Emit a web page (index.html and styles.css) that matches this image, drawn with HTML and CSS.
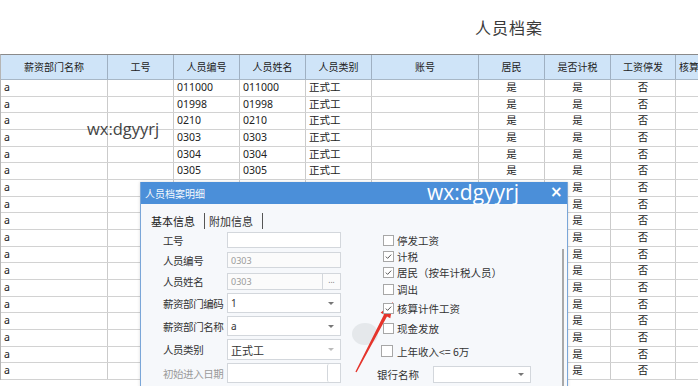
FILE: index.html
```html
<!DOCTYPE html>
<html lang="zh">
<head>
<meta charset="utf-8">
<title>人员档案</title>
<link rel="stylesheet" href="styles.css">
</head>
<body>
<div class="page">
  <div class="title">人员档案</div>
  <div class="grid">
    <div class="row head">
      <div class="c">薪资部门名称</div><div class="c">工号</div><div class="c">人员编号</div><div class="c">人员姓名</div><div class="c">人员类别</div><div class="c">账号</div><div class="c">居民</div><div class="c">是否计税</div><div class="c">工资停发</div><div class="c l">核算计件工资</div>
    </div>
    <div class="row"><div class="c">a</div><div class="c"></div><div class="c">011000</div><div class="c">011000</div><div class="c">正式工</div><div class="c"></div><div class="c m">是</div><div class="c m">是</div><div class="c m">否</div><div class="c"></div></div>
    <div class="row"><div class="c">a</div><div class="c"></div><div class="c">01998</div><div class="c">01998</div><div class="c">正式工</div><div class="c"></div><div class="c m">是</div><div class="c m">是</div><div class="c m">否</div><div class="c"></div></div>
    <div class="row"><div class="c">a</div><div class="c"></div><div class="c">0210</div><div class="c">0210</div><div class="c">正式工</div><div class="c"></div><div class="c m">是</div><div class="c m">是</div><div class="c m">否</div><div class="c"></div></div>
    <div class="row"><div class="c">a</div><div class="c"></div><div class="c">0303</div><div class="c">0303</div><div class="c">正式工</div><div class="c"></div><div class="c m">是</div><div class="c m">是</div><div class="c m">否</div><div class="c"></div></div>
    <div class="row"><div class="c">a</div><div class="c"></div><div class="c">0304</div><div class="c">0304</div><div class="c">正式工</div><div class="c"></div><div class="c m">是</div><div class="c m">是</div><div class="c m">否</div><div class="c"></div></div>
    <div class="row"><div class="c">a</div><div class="c"></div><div class="c">0305</div><div class="c">0305</div><div class="c">正式工</div><div class="c"></div><div class="c m">是</div><div class="c m">是</div><div class="c m">否</div><div class="c"></div></div>
    <div class="row"><div class="c">a</div><div class="c"></div><div class="c">0306</div><div class="c">0306</div><div class="c">正式工</div><div class="c"></div><div class="c m">是</div><div class="c m">是</div><div class="c m">否</div><div class="c"></div></div>
    <div class="row"><div class="c">a</div><div class="c"></div><div class="c">0307</div><div class="c">0307</div><div class="c">正式工</div><div class="c"></div><div class="c m">是</div><div class="c m">是</div><div class="c m">否</div><div class="c"></div></div>
    <div class="row"><div class="c">a</div><div class="c"></div><div class="c">0308</div><div class="c">0308</div><div class="c">正式工</div><div class="c"></div><div class="c m">是</div><div class="c m">是</div><div class="c m">否</div><div class="c"></div></div>
    <div class="row"><div class="c">a</div><div class="c"></div><div class="c">0309</div><div class="c">0309</div><div class="c">正式工</div><div class="c"></div><div class="c m">是</div><div class="c m">是</div><div class="c m">否</div><div class="c"></div></div>
    <div class="row"><div class="c">a</div><div class="c"></div><div class="c">0310</div><div class="c">0310</div><div class="c">正式工</div><div class="c"></div><div class="c m">是</div><div class="c m">是</div><div class="c m">否</div><div class="c"></div></div>
    <div class="row"><div class="c">a</div><div class="c"></div><div class="c">0311</div><div class="c">0311</div><div class="c">正式工</div><div class="c"></div><div class="c m">是</div><div class="c m">是</div><div class="c m">否</div><div class="c"></div></div>
    <div class="row"><div class="c">a</div><div class="c"></div><div class="c">0312</div><div class="c">0312</div><div class="c">正式工</div><div class="c"></div><div class="c m">是</div><div class="c m">是</div><div class="c m">否</div><div class="c"></div></div>
    <div class="row"><div class="c">a</div><div class="c"></div><div class="c">0313</div><div class="c">0313</div><div class="c">正式工</div><div class="c"></div><div class="c m">是</div><div class="c m">是</div><div class="c m">否</div><div class="c"></div></div>
    <div class="row"><div class="c">a</div><div class="c"></div><div class="c">0314</div><div class="c">0314</div><div class="c">正式工</div><div class="c"></div><div class="c m">是</div><div class="c m">是</div><div class="c m">否</div><div class="c"></div></div>
    <div class="row"><div class="c">a</div><div class="c"></div><div class="c">0315</div><div class="c">0315</div><div class="c">正式工</div><div class="c"></div><div class="c m">是</div><div class="c m">是</div><div class="c m">否</div><div class="c"></div></div>
    <div class="row"><div class="c">a</div><div class="c"></div><div class="c">0316</div><div class="c">0316</div><div class="c">正式工</div><div class="c"></div><div class="c m">是</div><div class="c m">是</div><div class="c m">否</div><div class="c"></div></div>
    <div class="row"><div class="c">a</div><div class="c"></div><div class="c">0317</div><div class="c">0317</div><div class="c">正式工</div><div class="c"></div><div class="c m">是</div><div class="c m">是</div><div class="c m">否</div><div class="c"></div></div>
  </div>

  <div class="wm">wx:dgyyrj</div>

  <div class="dialog">
    <div class="dbar">
      <span class="dtitle">人员档案明细</span>
      <span class="dwm">wx:dgyyrj</span>
      <span class="dclose">×</span>
    </div>
    <div class="dbody">
      <div class="tabs">
        <span class="tab active">基本信息</span><span class="sep"></span><span class="tab">附加信息</span><span class="sep"></span>
      </div>
      <div class="form">
        <div class="left">
          <div class="frow r1"><span class="lbl">工号</span><span class="inp"></span></div>
          <div class="frow r2"><span class="lbl">人员编号</span><span class="inp dis">0303</span></div>
          <div class="frow r3"><span class="lbl">人员姓名</span><span class="inp dis"><span class="val">0303</span><span class="dots">...</span></span></div>
          <div class="frow r4"><span class="lbl">薪资部门编码</span><span class="inp sel"><span class="val">1</span><span class="arr"></span></span></div>
          <div class="frow r5"><span class="lbl">薪资部门名称</span><span class="inp sel"><span class="val">a</span><span class="arr"></span></span></div>
          <div class="frow r6"><span class="lbl">人员类别</span><span class="inp sel"><span class="val big">正式工</span><span class="arr light"></span></span></div>
          <div class="frow r7"><span class="lbl gray">初始进入日期</span><span class="inp date"><span class="val"></span><span class="dbtn"></span></span></div>
        </div>
        <div class="right">
          <div class="crow k1"><span class="cb"></span><span>停发工资</span></div>
          <div class="crow k2"><span class="cb on"><svg viewBox="0 0 11 11"><path d="M2.2 5.6 L4.4 7.8 L8.8 3.2" fill="none" stroke="#555" stroke-width="1.2"/></svg></span><span>计税</span></div>
          <div class="crow k3"><span class="cb on"><svg viewBox="0 0 11 11"><path d="M2.2 5.6 L4.4 7.8 L8.8 3.2" fill="none" stroke="#555" stroke-width="1.2"/></svg></span><span>居民（按年计税人员）</span></div>
          <div class="crow k4"><span class="cb"></span><span>调出</span></div>
          <div class="crow k5"><span class="cb on"><svg viewBox="0 0 11 11"><path d="M2.2 5.6 L4.4 7.8 L8.8 3.2" fill="none" stroke="#555" stroke-width="1.2"/></svg></span><span>核算计件工资</span></div>
          <div class="crow k6"><span class="cb"></span><span>现金发放</span></div>
          <div class="crow k7"><span class="cb big"></span><span>上年收入&lt;= 6万</span></div>
          <div class="crow k8"><span class="blbl">银行名称</span><span class="inp bank"><span class="val"></span><span class="arr"></span></span></div>
        </div>
      </div>
      <div class="blob"></div>
      <div class="vscroll"></div>
    </div>
  </div>

  <svg class="arrow" width="698" height="386" viewBox="0 0 698 386">
    <polygon points="393,302 390.3,318.2 387,316.4 356.6,372.3 355.4,371.7 384,314.6 380.6,312.8" fill="#e5342b"/>
  </svg>
</div>
</body>
</html>
```

FILE: styles.css
```css
* { box-sizing: border-box; }
html, body { margin: 0; padding: 0; }
body {
  width: 698px;
  height: 386px;
  overflow: hidden;
  background: #fff;
  font-family: "Noto Sans", "Noto Sans CJK SC", sans-serif;
  color: #222;
}
.page { position: relative; width: 698px; height: 386px; overflow: hidden; }

.title {
  height: 54px;
  padding-left: 475px;
  padding-top: 15px;
  font-family: "Noto Sans CJK SC", sans-serif;
  font-size: 16px;
  letter-spacing: 1px;
  color: #3a3a3a;
}

.grid { width: 760px; border-top: 1px solid #8a8a8a; border-left: 1px solid #b5b5b5; }
.row {
  display: grid;
  grid-template-columns: 107px 66px 66px 66px 66px 107px 66px 66px 65px 90px;
  height: 16.67px;
  border-bottom: 1px solid #d2d2d2;
  font-size: 10.5px;
  line-height: 15px;
}
.row.head {
  height: 25px;
  background: #cfe4f8;
  border-bottom: 1px solid #a8b7c6;
  font-size: 10px;
  line-height: 24px;
  color: #333;
}
.row.head .c { text-align: center; padding: 0; border-right-color: #9fb0c2; }
.row.head .c.l { text-align: left; padding-left: 3px; }
.c {
  border-right: 1px solid #cbcbcb;
  padding-left: 3px;
  white-space: nowrap;
  overflow: hidden;
  color: #222;
}
.c.m { text-align: center; padding-left: 0; }

.wm {
  position: absolute;
  left: 87px;
  top: 117px;
  font-family: "Open Sans", sans-serif;
  font-size: 16.5px;
  color: #444;
}

.dialog {
  position: absolute;
  left: 140px;
  top: 182px;
  width: 428px;
  height: 210px;
  background: #f6f8fb;
  border: 1px solid #7aa6d8;
  border-top: none;
  box-shadow: 0 0 3px rgba(0,0,0,0.15);
}
.dbar {
  height: 22px;
  background: #4b8fd9;
  color: #fff;
  display: flex;
  align-items: center;
  position: relative;
}
.dtitle { font-family: "Noto Sans CJK SC", sans-serif; font-size: 10px; padding-left: 4px; opacity: 0.95; }
.dwm {
  position: absolute;
  left: 286px;
  top: -3px;
  font-family: "Open Sans", sans-serif;
  font-size: 21px;
  line-height: 26px;
}
.dclose { position: absolute; left: 409px; top: 2px; font-size: 15px; font-weight: bold; line-height: 16px; font-family: "DejaVu Sans", sans-serif; }

.dbody { position: relative; padding: 8px 0 0 10px; height: 188px; }
.tabs { display: flex; align-items: center; height: 17px; font-family: "Noto Sans CJK SC", sans-serif; font-size: 11px; }
.tab { color: #333; padding-right: 9px; }
.tab.active { color: #222; }
.tab + .sep + .tab { padding-left: 4px; }
.sep { width: 1px; height: 16px; background: #555; }

.form { position: relative; z-index: 1; display: flex; padding-top: 3px; padding-left: 12px; font-family: "Noto Sans CJK SC", sans-serif; font-size: 11px; }
.left { width: 178px; display: flex; flex-direction: column; }
.frow { display: flex; align-items: center; }
.lbl { width: 64px; flex: none; color: #333; white-space: nowrap; font-size: 10.5px; letter-spacing: -0.45px; }
.lbl.gray { color: #9a9a9a; }
.inp {
  width: 114px;
  height: 100%;
  background: #fff;
  border: 1px solid #d3d7dc;
  display: flex;
  align-items: center;
  font-family: "Noto Sans", "Noto Sans CJK SC", sans-serif;
  font-size: 9px;
  color: #9a9a9a;
  padding-left: 3px;
  position: relative;
}
.inp .val { flex: 1; }
.inp.sel { color: #333; font-size: 10px; }
.inp.sel .val.big { font-family: "Noto Sans CJK SC", sans-serif; font-size: 11px; }
.inp.dis { background: #fbfbfb; }
.dots {
  width: 18px;
  height: 100%;
  border-left: 1px solid #d3d7dc;
  font-size: 8px;
  text-align: center;
  line-height: 12px;
  color: #777;
}
.arr {
  width: 0; height: 0;
  border-left: 3px solid transparent;
  border-right: 3px solid transparent;
  border-top: 3px solid #777;
  margin-right: 6px;
}
.arr.light { border-top-color: #bbb; }
.dbtn {
  width: 13px;
  height: 100%;
  border-left: 1px solid #d3d7dc;
  border-radius: 2px;
}
.r1 { height: 16px; }
.r2 { height: 16px; margin-top: 4px; }
.r3 { height: 17px; margin-top: 5px; }
.r4 { height: 20px; margin-top: 3px; }
.r5 { height: 20px; margin-top: 3px; }
.r6 { height: 21px; margin-top: 3px; }
.r7 { height: 20px; margin-top: 3px; }

.right { margin-left: 42px; display: flex; flex-direction: column; font-size: 10.5px; color: #333; }
.crow { display: flex; align-items: center; height: 16px; white-space: nowrap; }
.cb {
  width: 11px; height: 11px;
  border: 1px solid #a7a7a7;
  background: #fff;
  margin-right: 3px;
  display: block;
  flex: none;
}
.cb svg { display: block; width: 9px; height: 9px; }
.cb.big { width: 12px; height: 12px; margin-left: -2px; margin-right: 4px; }
.k4 { margin-top: 1px; }
.k5 { margin-top: 3px; }
.k6 { margin-top: 4px; }
.k7 { margin-top: 7px; }
.k8 { margin-top: 6px; height: 18px; }
.blbl { margin-left: -6px; width: 56px; }
.inp.bank { width: 98px; height: 17px; }

.vscroll { position: absolute; left: 421px; top: 45px; width: 2px; height: 200px; background: #a9a9a9; }

.blob {
  position: absolute;
  left: 211px;
  top: 119px;
  width: 26px;
  height: 22px;
  border-radius: 50%;
  background: rgba(190,195,200,0.3);
}
.arrow { position: absolute; left: 0; top: 0; pointer-events: none; }
```
